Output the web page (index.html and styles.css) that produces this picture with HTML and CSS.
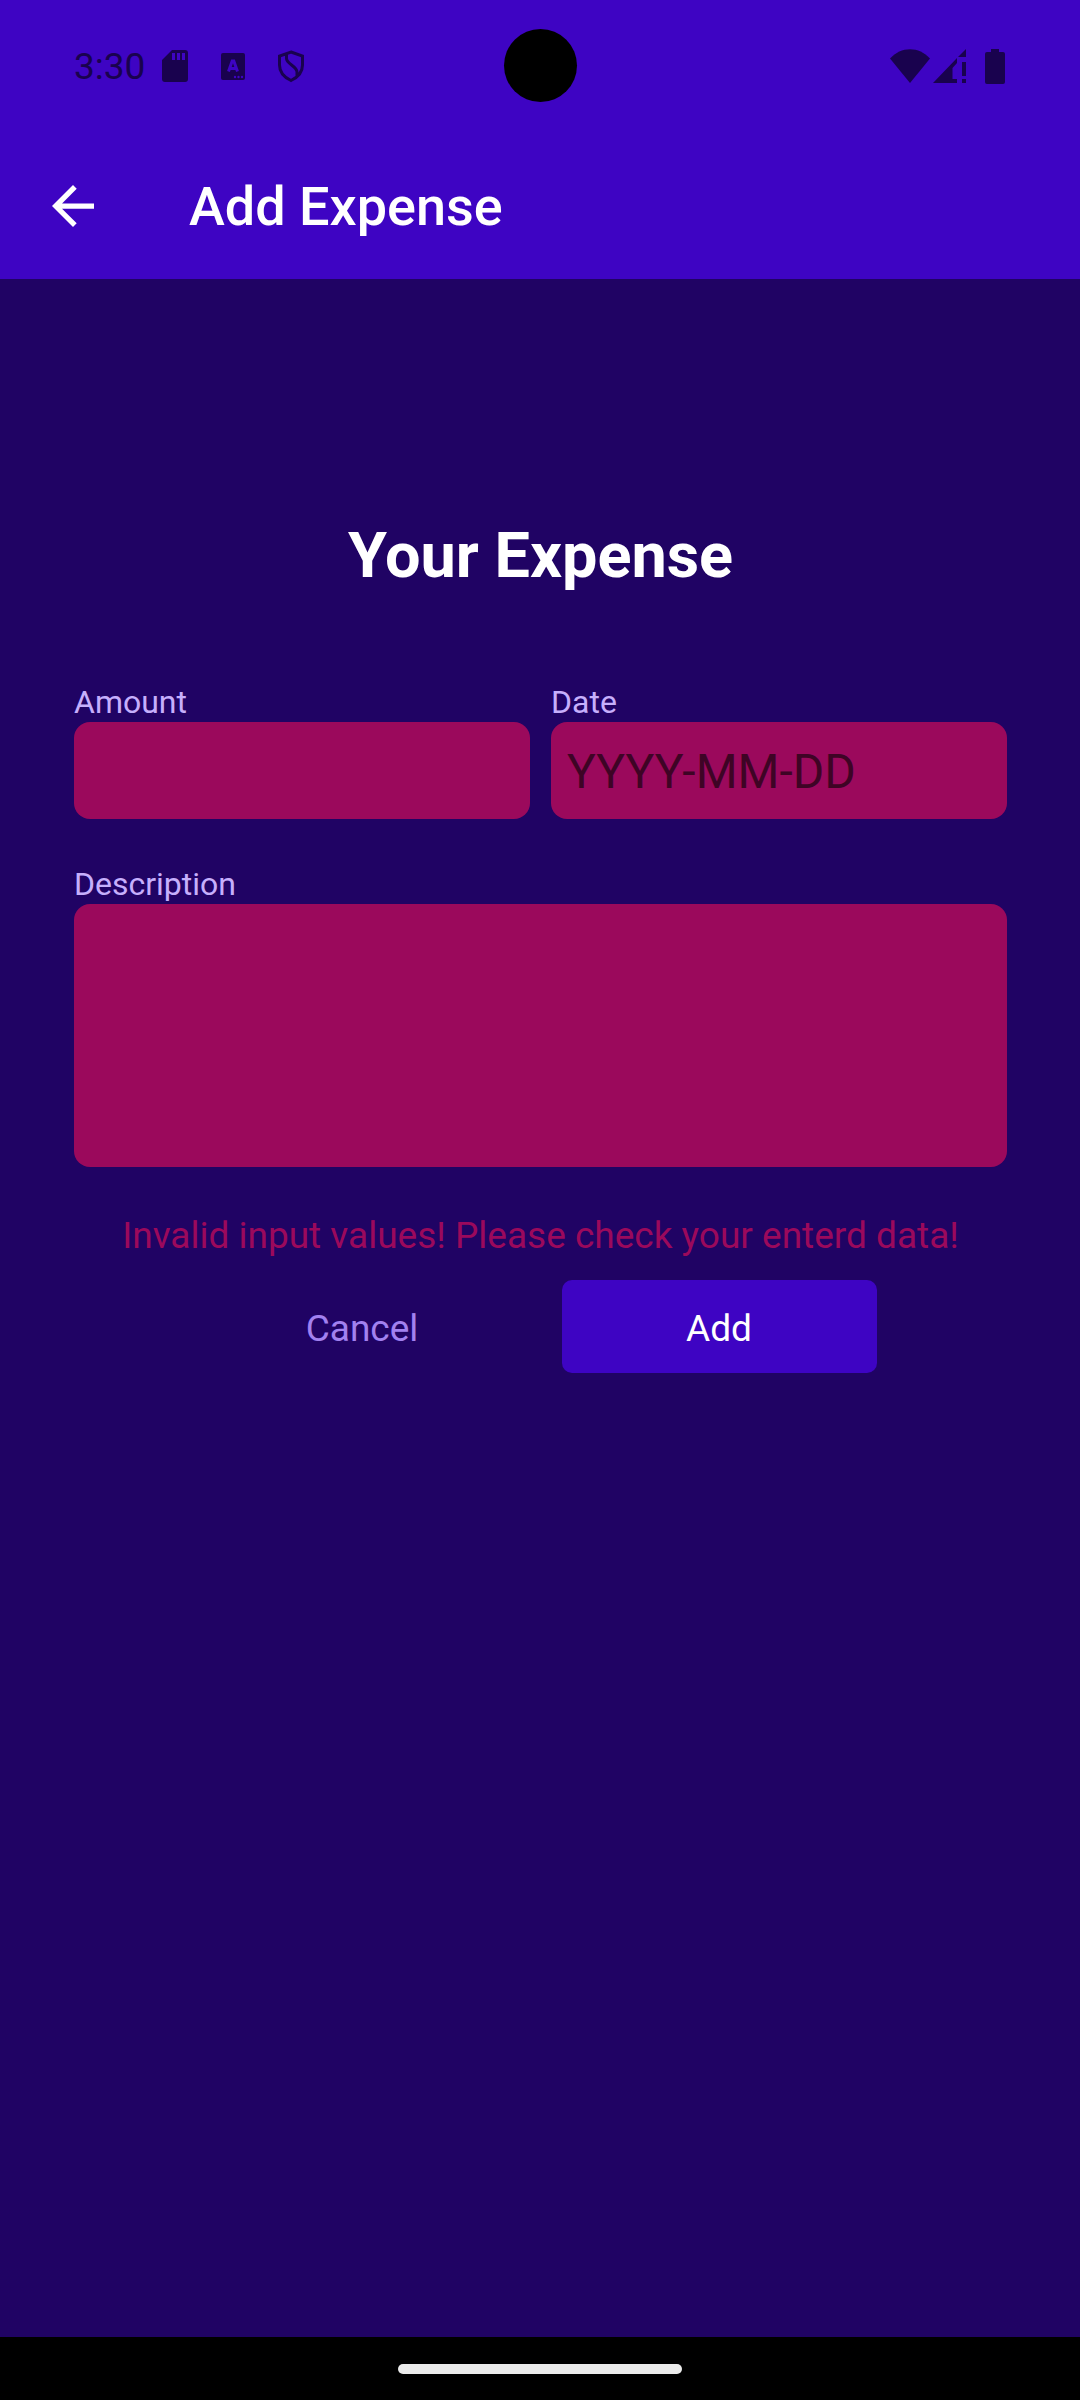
FILE: index.html
```html
<!DOCTYPE html>
<html lang="en">
<head>
<meta charset="utf-8">
<meta name="viewport" content="width=device-width, initial-scale=1">
<title>Add Expense</title>
<link rel="stylesheet" href="styles.css">
</head>
<body>
<div class="screen">
  <header class="top">
    <div class="status">
      <div class="status-group">
        <span class="time">3:30</span>
        <svg class="status-icon sd" width="26" height="32" viewBox="0 0 26 32" aria-hidden="true"><path fill-rule="evenodd" d="M10 0H23Q26 0 26 3V29Q26 32 23 32H3Q0 32 0 29V10ZM10 3V10H13V3ZM15 3V10H18V3ZM20 3V10H23V3Z"/></svg>
        <svg class="status-icon letter" width="24" height="27" viewBox="0 0 24 27" aria-hidden="true"><rect width="24" height="27" rx="2"/><path class="cut" d="M7.500 18.500 11.200 8H12.800L16.500 18.500M9 15.500H15"/><g class="dots"><circle cx="14" cy="24" r="1.200"/><circle cx="17.500" cy="24" r="1.200"/><circle cx="21" cy="24" r="1.200"/></g></svg>
        <svg class="status-icon shield" width="28" height="34" viewBox="0 0 28 34" aria-hidden="true"><path class="line" d="M14 3 25.500 7V16C25.500 23 20.500 28.500 14 31.500C7.500 28.500 2.500 23 2.500 16V7ZM9.500 5V9.500C9.500 15 20 17 20 23V27"/></svg>
      </div>
      <span class="camera"></span>
      <div class="status-group">
        <svg class="status-icon" width="40" height="34" viewBox="0 0 40 34" aria-hidden="true"><path d="M0 9.500C11-3 29-3 40 9.500L20 34Z"/></svg>
        <svg class="status-icon signal" width="33" height="34" viewBox="0 0 33 34" aria-hidden="true"><path d="M33 0V8H25ZM0 34 24 9V14L19.500 19V30H24V34ZM29 13H33V27H29ZM29 30H33V34H29Z"/></svg>
        <svg class="status-icon battery" width="20" height="35" viewBox="0 0 20 35" aria-hidden="true"><path d="M6 0H14V3H18Q20 3 20 5V33Q20 35 18 35H2Q0 35 0 33V5Q0 3 2 3H6Z"/></svg>
      </div>
    </div>
    <div class="bar">
      <button class="back" type="button" aria-label="Back"><svg width="42" height="42" viewBox="0 0 16 16" aria-hidden="true"><path d="M16 7H3.830L9.420 1.410 8 0 0 8 8 16 9.410 14.590 3.830 9H16Z"/></svg></button>
      <h1 class="bar-title">Add Expense</h1>
    </div>
  </header>
  <main class="content">
    <form class="form" novalidate>
      <h2 class="form-title">Your Expense</h2>
      <div class="row">
        <div class="field">
          <label class="label" for="amount">Amount</label>
          <input class="input" id="amount" type="text" inputmode="decimal">
        </div>
        <div class="field">
          <label class="label" for="date">Date</label>
          <input class="input" id="date" type="text" placeholder="YYYY-MM-DD" maxlength="10">
        </div>
      </div>
      <div class="field">
        <label class="label" for="description">Description</label>
        <textarea class="input area" id="description"></textarea>
      </div>
      <p class="error">Invalid input values! Please check your enterd data!</p>
      <div class="actions">
        <button class="button flat" type="button">Cancel</button>
        <button class="button" type="button">Add</button>
      </div>
    </form>
  </main>
  <footer class="nav"><span class="handle"></span></footer>
</div>
</body>
</html>
```
FILE: styles.css
```css
* {
  box-sizing: border-box;
}

body {
  margin: 0;
  background: #200364;
  font-family: Roboto, sans-serif;
}

.screen {
  display: flex;
  flex-direction: column;
  min-height: 100vh;
}

.top {
  background: #3e04c3;
}

.status {
  position: relative;
  display: flex;
  justify-content: space-between;
  height: 132px;
  padding: 0 75px 0 74px;
  color: #19024e;
}

.status-group {
  display: flex;
  align-items: center;
}

.time {
  padding-top: 2px;
  font-size: 37px;
  line-height: 44px;
}

.status-icon {
  display: block;
  fill: currentColor;
}

.sd {
  margin-left: 17px;
}

.letter {
  margin-left: 33px;
}

.shield {
  margin-left: 32px;
}

.cut {
  fill: none;
  stroke: #3e04c3;
  stroke-width: 3;
}

.dots {
  fill: #3e04c3;
}

.line {
  fill: none;
  stroke: currentColor;
  stroke-width: 3;
}

.signal {
  margin-left: 3px;
}

.battery {
  margin-left: 19px;
}

.camera {
  position: absolute;
  top: 29px;
  left: 50%;
  width: 73px;
  height: 73px;
  margin-left: -36px;
  border-radius: 50%;
  background: #000;
}

.bar {
  display: flex;
  align-items: center;
  height: 147px;
  padding: 0 42px;
}

.back {
  display: flex;
  padding: 10px;
  border: 0;
  background: none;
  fill: #fff;
}

.bar-title {
  margin: 0 0 0 85px;
  padding-top: 3px;
  color: #fff;
  font-size: 54px;
  font-weight: 500;
  line-height: 64px;
}

.content {
  flex: 1;
  padding: 240px 73px 0 74px;
}

.form-title {
  margin: 0 0 87px;
  color: #fff;
  font-size: 63px;
  font-weight: 700;
  line-height: 74px;
  text-align: center;
}

.row {
  display: flex;
  gap: 21px;
  margin-bottom: 43px;
}

.field {
  display: flex;
  flex: 1;
  flex-direction: column;
  min-width: 0;
}

.label {
  padding-top: 2px;
  color: #c6affc;
  font-size: 32px;
  line-height: 40px;
}

.input {
  width: 100%;
  height: 97px;
  padding: 18px 16px 16px;
  border: 0;
  border-radius: 16px;
  background: #9b095c;
  color: #2d0689;
  font-family: inherit;
  font-size: 48px;
}

.input::placeholder {
  color: #3e0425;
  opacity: 1;
}

.area {
  height: 263px;
  resize: none;
}

.error {
  margin: 44px 0 0;
  color: #9b095c;
  font-size: 37px;
  line-height: 50px;
  text-align: center;
}

.actions {
  display: flex;
  justify-content: center;
  gap: 42px;
  margin-top: 19px;
}

.button {
  width: 315px;
  height: 93px;
  padding: 3px 0 0;
  border: 0;
  border-radius: 10px;
  background: #3e04c3;
  color: #fff;
  font-family: inherit;
  font-size: 37px;
}

.flat {
  background: none;
  color: #a281f0;
}

.nav {
  display: flex;
  align-items: center;
  justify-content: center;
  height: 63px;
  background: #000;
}

.handle {
  width: 284px;
  height: 10px;
  border-radius: 5px;
  background: #ebebeb;
}
```
